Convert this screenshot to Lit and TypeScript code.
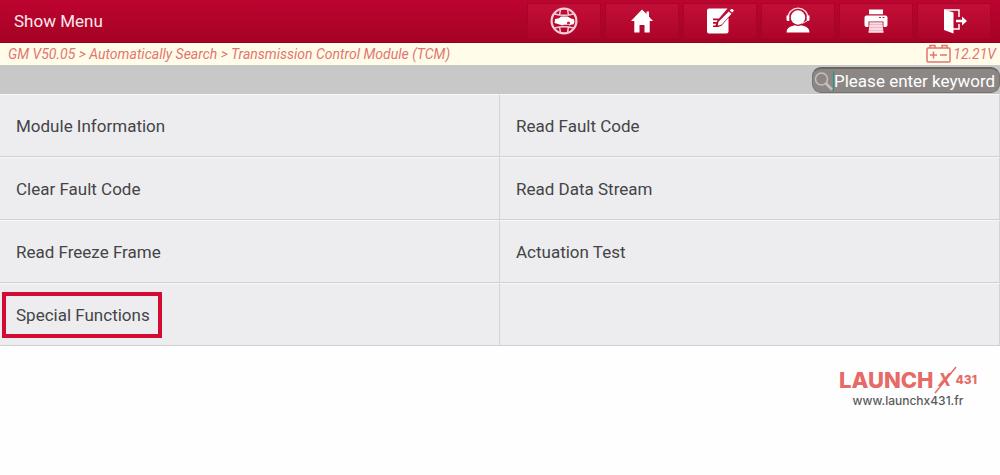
import { LitElement, html, css, svg } from "lit";
import { customElement, state } from "lit/decorators.js";

const icons = {
  globe: svg`<g fill="none" stroke="#f7cdd6" stroke-width="1.400">
      <circle cx="14" cy="14" r="12.4" stroke-width="2.200"/>
      <path d="M4.500 7Q14 9.500 23.500 7M4.500 21Q14 18.500 23.500 21M10.500 2.500L9.500 8M17.500 2.500L18.500 8M9.500 20l1 5.500M18.500 20l-1 5.500"/></g>
      <path fill="#fff" d="M4.500 16l.5-4 4-.8 2-1.700h6.500l3.500 2 3 .8.500 2.700-1.200 2.500h-2l-1.500 1-2-.8h-4l-1.500.8-2-.8z"/>
      <circle cx="18.500" cy="16" r="1.600" fill="#c22142"/>`,
  home: svg`<path fill="#fff" d="M14 2.500l4.500 4.600V4.500H21v5.200l4 4.300h-3.300v11.500h-5.200V18h-5v7.500H6.300V14H3z"/>`,
  edit: svg`<path fill="#fff" d="M3 1.500h18.500L13 11.500H7v1.800h4.500l-.8 1.800H7v1.600h3l-.4 1.800H7V20h5l3.500-1.300 7-8V24.500a2 2 0 0 1-2 2H3a2 2 0 0 1-2-2v-21a2 2 0 0 1 2-2z"/>
      <path fill="#fff" d="M22.800 4.500l2.700 2.200-9.800 10.700-4 1.300.8-4zM23.700 3.500l1.400-1.400q2-.6 2.800 1.500l-1.500 2z"/>`,
  support: svg`<circle cx="14" cy="10.500" r="7.200" fill="#fff"/>
      <path fill="none" stroke="#fbdde3" stroke-width="1.300" d="M4 11a10 9.800 0 0 1 20 0"/>
      <path fill="#fff" d="M2.500 8.500h2.800V14H4q-1.500 0-1.500-1.500zM22.700 8.500h2.800v4Q25.500 14 24 14h-1.300zM2.500 25.500q0-5 5.500-6.500l3-.8q3 1.500 6 0l3 .8q5.500 1.500 5.500 6.500z"/>
      <path d="M18 16.500l5-2.500" stroke="#fbdde3"/>`,
  print: svg`<path fill="#fff" d="M7 2.500h14v4.800H7zM4.500 8.500h19q2 0 2 2V18q0 2-2 2h-2v-5.500h-15V20h-2q-2 0-2-2v-7.500q0-2 2-2z"/>
      <path fill="#f0b6c2" d="M7.500 15.500h13l1 10h-15z"/>
      <path stroke="#fff" d="M7.500 16h13M7.500 19h13M7 22h14M6.500 25h15"/>
      <path stroke="#c22142" d="M17 10.500h2M20.500 10.500h2"/>`,
  exit: svg`<path fill="#fff" d="M4 2.500l9.500 3V26.500L4 23z"/>
      <path fill="none" stroke="#fff" stroke-width="1.500" d="M4 3h15v7M13 22h6v-5"/>
      <path fill="#fff" d="M16 12.800h6V9.500l5 4.500-5 4.500v-3.300h-6z"/>`,
};

const tools = [
  { label: "Diagnostics", icon: icons.globe },
  { label: "Home", icon: icons.home },
  { label: "Feedback", icon: icons.edit },
  { label: "Support", icon: icons.support },
  { label: "Print", icon: icons.print },
  { label: "Exit", icon: icons.exit },
];

const entries = [
  "Module Information",
  "Read Fault Code",
  "Clear Fault Code",
  "Read Data Stream",
  "Read Freeze Frame",
  "Actuation Test",
  "Special Functions",
  "",
];

@customElement("app-root")
export class AppRoot extends LitElement {
  @state() private selected = "Special Functions";

  static styles = css`
    :host {
      display: block;
      min-height: 100vh;
      background: #fefefe;
      color: #444446;
      font-family: Roboto, "Liberation Sans", sans-serif;
    }
    * { box-sizing: border-box; }
    button, input { font: inherit; border: 0; margin: 0; }
    svg { display: block; flex: none; }
    .header {
      display: flex;
      align-items: center;
      justify-content: space-between;
      height: 43px;
      padding: 0 9px 0 14px;
      background: linear-gradient(#bd0430, #a50224);
      border-bottom: 1px solid #93001c;
      color: #fbe9ec;
    }
    .title { margin: 0; font-size: 17px; font-weight: 400; line-height: 24px; }
    .tools { display: flex; gap: 4px; height: 36px; }
    .tool {
      display: flex;
      align-items: center;
      justify-content: center;
      width: 74px;
      padding: 0;
      border: 1px solid #a50529;
      background: linear-gradient(#c20f38, #ae0429);
      cursor: pointer;
    }
    .path {
      display: flex;
      align-items: center;
      justify-content: space-between;
      height: 22px;
      padding: 0 4px 0 8px;
      background: #fffdea;
      color: #e27570;
      font-size: 14px;
      font-style: italic;
      line-height: 22px;
    }
    .battery { display: flex; align-items: center; gap: 2px; }
    .searchbar {
      display: flex;
      justify-content: flex-end;
      height: 29px;
      padding: 2px 0 1px;
      background: #c8c8c8;
    }
    .search {
      display: flex;
      align-items: center;
      width: 188px;
      padding-left: 1px;
      border: 1px solid #777371;
      border-top: 2px solid #696563;
      border-radius: 9px;
      background: #8c8785;
    }
    .caret { flex: none; width: 1px; height: 20px; background: #259675; }
    .field {
      flex: 1;
      min-width: 0;
      padding: 0;
      background: none;
      color: #fff;
      font-size: 17px;
      line-height: 22px;
      outline: none;
    }
    .field::placeholder { color: #fff; opacity: 1; }
    .menu { display: grid; grid-template-columns: 1fr 1fr; }
    .cell {
      display: flex;
      align-items: center;
      height: 63px;
      padding: 0 2px;
      border-top: 1px solid #f8f8f9;
      border-bottom: 1px solid #d0d0d2;
      border-right: 1px solid #d4d4d6;
      background: #ededef;
    }
    .entry {
      padding: 0 8px 0 10px;
      border: 4px solid transparent;
      height: 46px;
      background: none;
      color: inherit;
      font-size: 17px;
      line-height: 24px;
      white-space: nowrap;
      cursor: pointer;
    }
    .entry.selected { border-color: #d30a33; }
    .brand {
      display: flex;
      flex-direction: column;
      align-items: center;
      width: 144px;
      margin: 20px 20px 0 auto;
      color: #e66a67;
      font-family: Inter, "Open Sans", sans-serif;
    }
    .logo { display: flex; align-items: center; height: 28px; }
    .name { font-size: 22px; font-weight: 800; line-height: 28px; }
    .mark { position: relative; width: 22px; height: 28px; font-size: 18px; font-style: italic; font-weight: 700; line-height: 28px; text-align: center; }
    .slash { position: absolute; left: 0; top: 0; }
    .model { font-size: 12px; font-weight: 800; line-height: 28px; }
    .site { color: #5c5a5a; font-size: 12px; font-weight: 500; line-height: 14px; text-decoration: none; }
  `;

  render() {
    return html`
      <header class="header">
        <h1 class="title">Show Menu</h1>
        <nav class="tools">
          ${tools.map((t) => html`<button class="tool" aria-label=${t.label}>
            <svg width="28" height="28" viewBox="0 0 28 28">${t.icon}</svg>
          </button>`)}
        </nav>
      </header>
      <div class="path">
        <span>GM V50.05 &gt; Automatically Search &gt; Transmission Control Module (TCM)</span>
        <span class="battery">
          <svg width="25" height="20" viewBox="0 0 25 20" fill="none" stroke="#e27570" stroke-width="1.500">
            <rect x="1" y="4" width="23" height="14" rx="1"/>
            <path d="M4 4V1.500h5V4M16 4V1.500h5V4M4 11h7M7.500 7.500v7M14 11h7"/>
          </svg>
          12.21V
        </span>
      </div>
      <div class="searchbar">
        <label class="search">
          <svg width="19" height="20" viewBox="0 0 19 20" fill="none" stroke="#c4c0be">
            <circle cx="7.500" cy="8" r="6" stroke-width="1.500"/><path stroke-width="2.500" d="M12 12.500l6 6"/>
          </svg>
          <span class="caret"></span>
          <input class="field" type="text" aria-label="Search" placeholder="Please enter keyword">
        </label>
      </div>
      <main class="menu">
        ${entries.map((e) => html`<div class="cell">
          ${e ? html`<button class="entry ${e === this.selected ? "selected" : ""}" @click=${() => (this.selected = e)}>${e}</button>` : ""}
        </div>`)}
      </main>
      <footer class="brand">
        <div class="logo">
          <span class="name">LAUNCH</span>
          <span class="mark">X<svg class="slash" width="24" height="28" viewBox="0 0 24 28"><path d="M1 27L22 1" stroke="#e66a67" stroke-width="1.500"/></svg></span>
          <span class="model">431</span>
        </div>
        <a class="site" href="#">www.launchx431.fr</a>
      </footer>
    `;
  }
}
